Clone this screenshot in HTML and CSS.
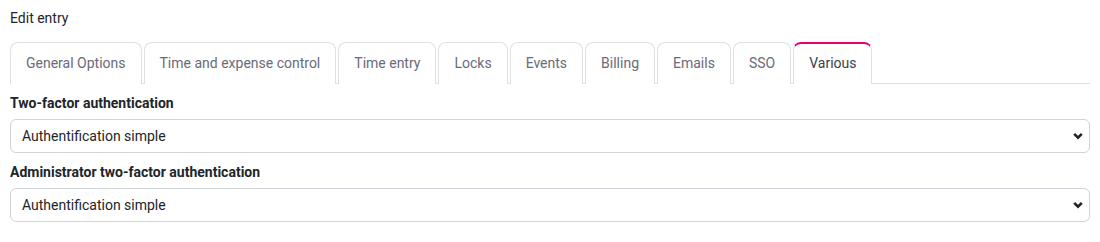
FILE: index.html
```html
<!DOCTYPE html>
<html lang="en">

<head>
    <meta charset="UTF-8">
    <meta name="viewport" content="width=device-width, initial-scale=1.0">
    <title>Edit entry</title>
    <link rel="stylesheet" href="styles.css">
</head>

<body>
    <div class="page">
        <div class="title">Edit entry</div>

        <ul class="tabs">
            <li class="tab">General Options</li>
            <li class="tab">Time and expense control</li>
            <li class="tab">Time entry</li>
            <li class="tab">Locks</li>
            <li class="tab">Events</li>
            <li class="tab">Billing</li>
            <li class="tab">Emails</li>
            <li class="tab">SSO</li>
            <li class="tab active">Various</li>
        </ul>

        <div class="form">
            <label class="lbl" for="tfa">Two-factor authentication</label>
            <select id="tfa" class="sel">
                <option>Authentification simple</option>
            </select>

            <label class="lbl" for="tfa-admin">Administrator two-factor authentication</label>
            <select id="tfa-admin" class="sel">
                <option>Authentification simple</option>
            </select>
        </div>
    </div>
</body>

</html>
```

FILE: styles.css
```css
body {
    margin: 0;
    font-family: Roboto, "Liberation Sans", sans-serif;
    font-size: 14px;
    color: #212529;
    background: #fff;
}

.page {
    padding: 8px 10px;
}

.title {
    line-height: 20px;
    height: 20px;
    margin-bottom: 14px;
}

.tabs {
    display: flex;
    list-style: none;
    margin: 0;
    padding: 0;
    border-bottom: 1px solid #dee2e6;
}

.tab {
    padding: 10px 15px;
    line-height: 20px;
    margin-right: 2px;
    margin-bottom: -1px;
    border: 1px solid #dee2e6;
    border-bottom: 0;
    border-radius: 8px 8px 0 0;
    color: #6a6a78;
    background: #fff;
    cursor: pointer;
}

.tab.active {
    border-top: 2px solid #e5006d;
    padding-top: 9px;
    padding-bottom: 11px;
    color: #3c4048;
}

.form {
    padding-top: 9px;
}

.lbl {
    display: block;
    font-weight: bold;
    line-height: 20px;
    margin-bottom: 6px;
}

.sel {
    display: block;
    width: 100%;
    height: 34px;
    margin: 0 0 9px;
    padding: 0 30px 0 11px;
    font-family: Roboto, "Liberation Sans", sans-serif;
    font-size: 14px;
    color: #212529;
    background-color: #fff;
    border: 1px solid #ced4da;
    border-radius: 6px;
    appearance: none;
    -webkit-appearance: none;
    background-image: url("data:image/svg+xml,%3Csvg xmlns='http://www.w3.org/2000/svg' width='10' height='8' viewBox='0 0 10 8'%3E%3Cpath d='M1.2 1.8 L5 5.6 L8.8 1.8' fill='none' stroke='%23222' stroke-width='2.6'/%3E%3C/svg%3E");
    background-repeat: no-repeat;
    background-position: right 6px center;
    background-size: 10px 8px;
}
```
